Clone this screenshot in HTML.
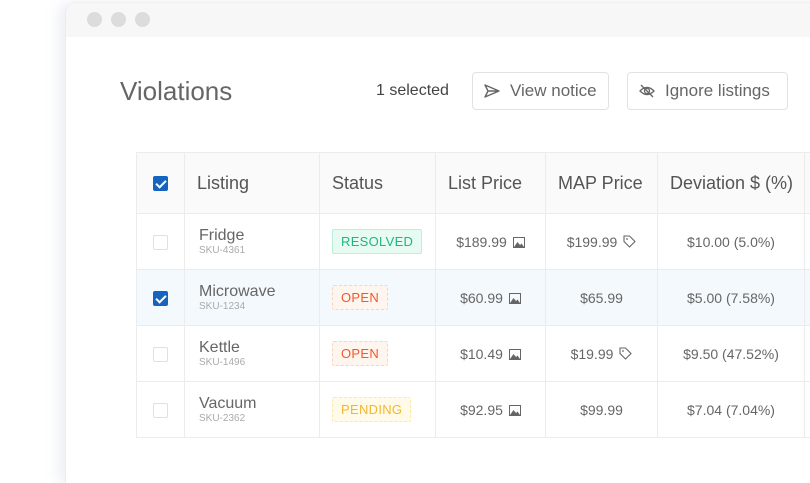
<!DOCTYPE html>
<html><head><meta charset="utf-8"><style>
*{box-sizing:border-box;margin:0;padding:0}
html,body{width:810px;height:483px;overflow:hidden}
body{background:#fff;font-family:"Liberation Sans",sans-serif;position:relative}
.win{position:absolute;left:65px;top:2px;width:800px;height:481px;border-radius:12px 0 0 0;background:#fff;box-shadow:-6px 0 14px rgba(200,205,220,.35);border-left:1px solid #ececf0;border-top:1px solid #f0f0f0}
.bar{height:34px;background:#f7f7f7;border-radius:12px 0 0 0}
.dot{position:absolute;top:9px;width:15px;height:15px;border-radius:50%;background:#dcdcdc}
.title{position:absolute;left:120px;top:76px;font-size:26px;color:#666}
.sel{position:absolute;left:376px;top:82px;font-size:16px;color:#444}
.btn{position:absolute;top:72px;height:38px;border:1px solid #e2e2e2;border-radius:4px;font-size:17px;color:#666;display:flex;align-items:center;padding-left:10px}
table{position:absolute;left:136px;top:152px;width:690px;border-collapse:collapse;table-layout:fixed}
td,th{border:1px solid #ececec;font-weight:normal;color:#666;font-size:14px;text-align:center;vertical-align:middle}
th{height:61px;background:#fafafa;font-size:18px;color:#555;text-align:left;padding-left:12px}
td{height:56px}
tr.hl td{background:#f3f9fd}
.cb{display:inline-block;width:15px;height:15px;border:1px solid #e0e0e0;border-radius:2px;background:#fff;vertical-align:middle}
.cb.on{background:#1565c0;border-color:#1565c0;position:relative}
.cb.on:after{content:"";position:absolute;left:4px;top:1px;width:4px;height:8px;border:solid #fff;border-width:0 2px 2px 0;transform:rotate(45deg)}
.nm{text-align:left;padding-left:14px}
.nm b{display:block;font-weight:normal;font-size:16px;color:#666;line-height:18px}
.nm i{display:block;font-style:normal;font-size:10px;color:#aaa}
.st{text-align:left;padding-left:12px}
.tag{display:inline-block;font-size:13px;padding:4px 8px;border-radius:2px;letter-spacing:.3px}
.res{background:#e8fbf3;border:1px solid #b8f0d8;color:#20b581}
.open{background:#fff5ef;border:1px dashed #fad3bd;color:#f0592a}
.pend{background:#fffbe8;border:1px dashed #fde9a7;color:#f4b62c}
svg.i{vertical-align:-1px;margin-left:6px}
</style></head><body>
<div class="win"><div class="bar"></div>
<div class="dot" style="left:21px"></div><div class="dot" style="left:45px"></div><div class="dot" style="left:69px"></div></div>
<div class="title">Violations</div>
<div class="sel">1 selected</div>
<div class="btn" style="left:472px;width:137px"><svg width="18" height="16" viewBox="0 0 18 16"><path d="M2 2L16 8L2 14L5 8Z M5 8H16" fill="none" stroke="#666" stroke-width="1.4" stroke-linejoin="round"/></svg><span style="margin-left:9px">View notice</span></div>
<div class="btn" style="left:627px;width:161px"><svg width="18" height="16" viewBox="0 0 18 16"><path d="M2 8Q9 1 16 8Q9 15 2 8Z" fill="none" stroke="#666" stroke-width="1.3"/><circle cx="9" cy="8" r="2.5" fill="none" stroke="#666" stroke-width="1.3"/><path d="M3 2L15 14" stroke="#666" stroke-width="1.3"/></svg><span style="margin-left:9px">Ignore listings</span></div>
<table>
<colgroup><col style="width:48px"><col style="width:135px"><col style="width:116px"><col style="width:110px"><col style="width:112px"><col style="width:147px"><col style="width:22px"></colgroup>
<tr><th style="text-align:center;padding:0"><span class="cb on"></span></th><th>Listing</th><th>Status</th><th>List Price</th><th>MAP Price</th><th>Deviation $ (%)</th><th></th></tr>
<tr><td><span class="cb"></span></td><td class="nm"><b>Fridge</b><i>SKU-4361</i></td><td class="st"><span class="tag res">RESOLVED</span></td><td>$189.99<svg class="i" width="12" height="11" viewBox="0 0 12 11"><rect x=".5" y=".5" width="11" height="10" fill="none" stroke="#666"/><path d="M1 10L4.5 5L7 8L8.5 6.5L11 10Z" fill="#666"/></svg></td><td>$199.99<svg class="i" width="13" height="13" viewBox="0 0 13 13"><path d="M1 1H6.5L12 6.5L6.5 12L1 6.5Z" fill="none" stroke="#666" stroke-width="1.1"/><circle cx="4" cy="4" r=".9" fill="#666"/></svg></td><td>$10.00 (5.0%)</td><td></td></tr>
<tr class="hl"><td><span class="cb on"></span></td><td class="nm"><b>Microwave</b><i>SKU-1234</i></td><td class="st"><span class="tag open">OPEN</span></td><td>$60.99<svg class="i" width="12" height="11" viewBox="0 0 12 11"><rect x=".5" y=".5" width="11" height="10" fill="none" stroke="#666"/><path d="M1 10L4.5 5L7 8L8.5 6.5L11 10Z" fill="#666"/></svg></td><td>$65.99</td><td>$5.00 (7.58%)</td><td></td></tr>
<tr><td><span class="cb"></span></td><td class="nm"><b>Kettle</b><i>SKU-1496</i></td><td class="st"><span class="tag open">OPEN</span></td><td>$10.49<svg class="i" width="12" height="11" viewBox="0 0 12 11"><rect x=".5" y=".5" width="11" height="10" fill="none" stroke="#666"/><path d="M1 10L4.5 5L7 8L8.5 6.5L11 10Z" fill="#666"/></svg></td><td>$19.99<svg class="i" width="13" height="13" viewBox="0 0 13 13"><path d="M1 1H6.5L12 6.5L6.5 12L1 6.5Z" fill="none" stroke="#666" stroke-width="1.1"/><circle cx="4" cy="4" r=".9" fill="#666"/></svg></td><td>$9.50 (47.52%)</td><td></td></tr>
<tr><td><span class="cb"></span></td><td class="nm"><b>Vacuum</b><i>SKU-2362</i></td><td class="st"><span class="tag pend">PENDING</span></td><td>$92.95<svg class="i" width="12" height="11" viewBox="0 0 12 11"><rect x=".5" y=".5" width="11" height="10" fill="none" stroke="#666"/><path d="M1 10L4.5 5L7 8L8.5 6.5L11 10Z" fill="#666"/></svg></td><td>$99.99</td><td>$7.04 (7.04%)</td><td></td></tr>
</table>
</body></html>
